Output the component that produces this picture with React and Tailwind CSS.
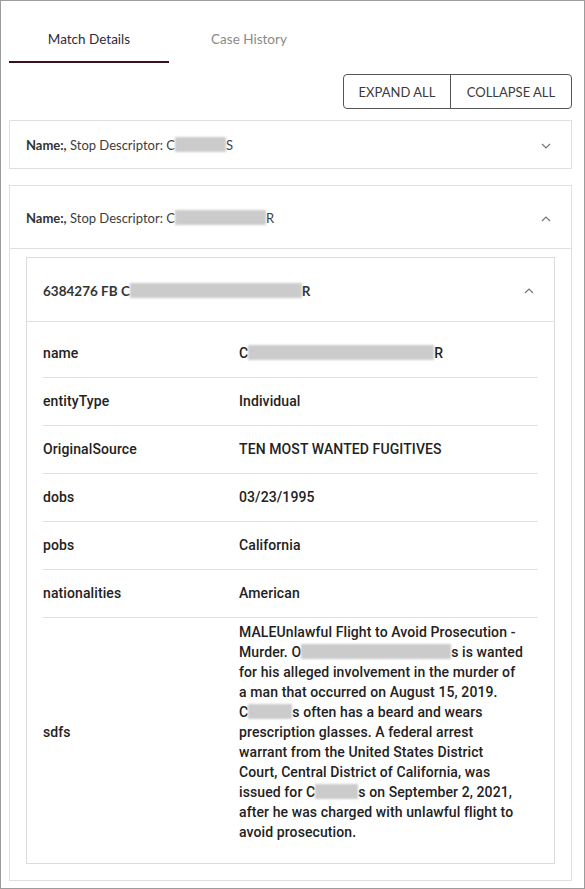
import React from "react";

const HEAD_FONT = { fontFamily: "Lato, 'Open Sans', sans-serif" };

function Blur({ w }) {
  return (
    <span
      className={`inline-block h-[15px] align-[-2px] bg-[#cbcbcb] blur-[1px] ${w}`}
    />
  );
}

function Chevron({ up }) {
  return (
    <svg width="10" height="6" viewBox="0 0 10 6" className="text-[#777]">
      <polyline
        points={up ? "1,5 5,1 9,5" : "1,1 5,5 9,1"}
        fill="none"
        stroke="currentColor"
        strokeWidth="1.2"
      />
    </svg>
  );
}

const ROWS = [
  { label: "name", value: <>C<Blur w="w-[186px]" />R</> },
  { label: "entityType", value: "Individual" },
  { label: "OriginalSource", value: "TEN MOST WANTED FUGITIVES" },
  { label: "dobs", value: "03/23/1995" },
  { label: "pobs", value: "California" },
  { label: "nationalities", value: "American" },
];

const SDFS_LINES = [
  "MALEUnlawful Flight to Avoid Prosecution -",
  <>Murder. O<Blur w="w-[150px]" />s is wanted</>,
  "for his alleged involvement in the murder of",
  "a man that occurred on August 15, 2019.",
  <>C<Blur w="w-[44px]" />s often has a beard and wears</>,
  "prescription glasses. A federal arrest",
  "warrant from the United States District",
  "Court, Central District of California, was",
  <>issued for C<Blur w="w-[43px]" />s on September 2, 2021,</>,
  "after he was charged with unlawful flight to",
  "avoid prosecution.",
];

export default function App() {
  return (
    <div
      className="h-[889px] w-[585px] overflow-hidden border border-[#9c9c9c] bg-white pl-2 pr-3 pt-[14px]"
      style={HEAD_FONT}
    >
      {/* TABS */}
      <div className="flex h-12">
        <div className="flex w-40 items-center justify-center border-b-2 border-[#3b1020] pt-[3px] text-[13.5px] text-[#2e2b3d]">
          Match Details
        </div>
        <div className="flex w-40 items-center justify-center pt-[1px] text-[13.5px] text-[#8a8a8a]">
          Case History
        </div>
      </div>

      {/* EXPAND / COLLAPSE */}
      <div className="mt-[11px] flex justify-end">
        <div className="flex h-[35px] overflow-hidden rounded-[4px] border border-[#555] text-[13px] text-[#3a3a3a]">
          <button className="w-[107px] border-r border-[#555] pt-[2px]">EXPAND ALL</button>
          <button className="w-[120px] pt-[2px]">COLLAPSE ALL</button>
        </div>
      </div>

      {/* ACCORDION 1 */}
      <div className="mt-[11px] border border-[#e0e0e0]">
        <div className="flex h-[47px] items-center justify-between px-4 pt-[2px] text-[13px] text-[#3d3d3d]">
          <span className="whitespace-nowrap">
            <b className="font-bold text-[#333]">Name:,</b> Stop Descriptor: C
            <Blur w="w-[51px]" />S
          </span>
          <span className="mr-[4px]">
            <Chevron />
          </span>
        </div>
      </div>

      {/* ACCORDION 2 */}
      <div className="mt-4 border border-[#e0e0e0]">
        <div className="flex h-[63px] items-center justify-between border-b border-[#e0e0e0] px-4 pt-[3px] text-[13px] text-[#3d3d3d]">
          <span className="whitespace-nowrap">
            <b className="font-bold text-[#333]">Name:,</b> Stop Descriptor: C
            <Blur w="w-[91px]" />R
          </span>
          <span className="mr-[4px]">
            <Chevron up />
          </span>
        </div>

        <div className="px-4 pb-4 pt-2">
          <div className="border border-[#dcdcdc]">
            <div className="flex h-[64px] items-center justify-between border-b border-[#e0e0e0] px-4 pt-[3px] text-[13.5px] font-bold text-[#333]">
              <span className="whitespace-nowrap">
                6384276 FB C<Blur w="w-[172px]" />R
              </span>
              <span className="mr-[4px]">
                <Chevron up />
              </span>
            </div>

            <div
              className="divide-y divide-[#e0e0e0] px-4 pb-4 pt-2 text-[14px] font-medium tracking-[0.1px] text-[#222]"
              style={{ fontFamily: "Roboto, sans-serif" }}
            >
              {ROWS.map((row) => (
                <div key={row.label} className="grid h-12 grid-cols-[196px_1fr] items-center">
                  <span>{row.label}</span>
                  <span className="whitespace-nowrap">{row.value}</span>
                </div>
              ))}
              <div className="grid grid-cols-[196px_1fr] items-center pb-[5px] pt-[4px] leading-5">
                <span>sdfs</span>
                <p>
                  {SDFS_LINES.map((line, i) => (
                    <span key={i} className="block whitespace-nowrap">
                      {line}
                    </span>
                  ))}
                </p>
              </div>
            </div>
          </div>
        </div>
      </div>
    </div>
  );
}
